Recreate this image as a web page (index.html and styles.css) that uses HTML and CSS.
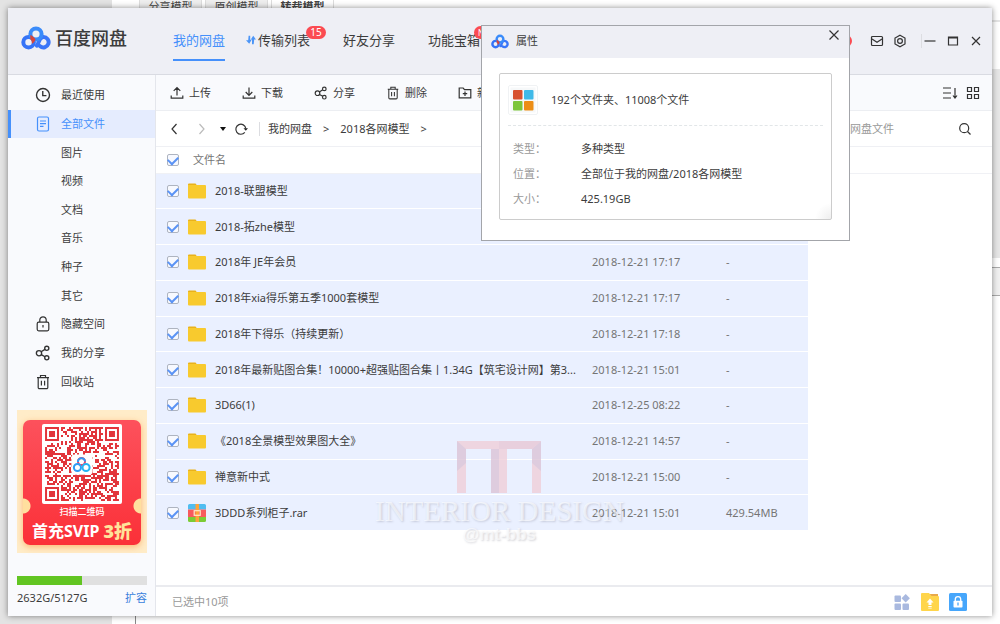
FILE: index.html
```html
<!DOCTYPE html>
<html lang="zh-CN">
<head>
<meta charset="utf-8">
<meta name="viewport" content="width=device-width, initial-scale=1">
<title>百度网盘</title>
<link rel="stylesheet" href="styles.css">
</head>
<body>
<svg class="sprite" aria-hidden="true">
  <symbol id="i-logo" viewBox="0 0 30 24">
    <g fill="none" stroke-width="4" stroke-linecap="round">
      <path d="M15.800 19.600C18.400 17.600 17.200 11.200 22.300 11a5.200 5.200 0 1 1-3.200 9.200" stroke="#3b76f8"/>
      <circle cx="7.600" cy="16.200" r="5.300" stroke="#3573f7"/>
      <circle cx="15" cy="8" r="5.600" stroke="#3a8bfa"/>
    </g>
    <path d="M9.300 9c2.200 1 4.500 2.600 5.200 4.800-.7 1.800-2.200 3.400-3.700 4 .2-1.800-.1-3.200-1.500-4.500z" fill="#d8453c"/>
  </symbol>
  <symbol id="i-clock" viewBox="0 0 14 14"><circle cx="7" cy="7" r="5.700"/><path d="M6.800 3.500V7.500H10"/></symbol>
  <symbol id="i-doc" viewBox="0 0 14 16"><rect x="1.500" y="1" width="11" height="14" rx="1.500"/><path d="M4 5h6M4 7.700h6M4 10.400h3.500"/></symbol>
  <symbol id="i-lock" viewBox="0 0 14 16"><rect x="1.200" y="6.200" width="11.600" height="8.600" rx="1.500"/><path d="M3.800 6V4a3.200 3.200 0 0 1 6.400 0v2M7 9v2.600"/></symbol>
  <symbol id="i-share" viewBox="0 0 14 14"><circle cx="3.500" cy="7.200" r="2.300"/><circle cx="10.300" cy="2.900" r="1.800"/><circle cx="10.300" cy="11.200" r="1.800"/><path d="M5.400 5.900 8.700 3.800M5.500 8.400l3.200 1.900"/></symbol>
  <symbol id="i-trash" viewBox="0 0 14 16"><path d="M1 3.600h12M4.500 3.300V1.500h5v1.800M2.200 3.800v9.700a1.200 1.200 0 0 0 1.200 1.200h7.200a1.200 1.200 0 0 0 1.200-1.200V3.800M5.400 6.800v4.800M8.600 6.800v4.800"/></symbol>
  <symbol id="i-up" viewBox="0 0 14 14"><path d="M7 9.500V2M3.700 4.900 7 1.600l3.300 3.300M1.200 9.500v2.700h11.600V9.500"/></symbol>
  <symbol id="i-down" viewBox="0 0 14 14"><path d="M7 1.500V9M3.700 6 7 9.300 10.300 6M1.200 9.500v2.700h11.600V9.500"/></symbol>
  <symbol id="i-newdir" viewBox="0 0 14 14"><path d="M1.200 2h4l1.300 1.600h6.300v8.200H1.200zM7 5.500v4.400M4.800 7.700h4.400"/></symbol>
  <symbol id="i-folder" viewBox="0 0 18 16"><path d="M0 1.500A1 1 0 0 1 1 .5h6.500l2 2.500H0z" fill="#e9b21b"/><path d="M0 2h17a1 1 0 0 1 1 1v11.500a1 1 0 0 1-1 1H1a1 1 0 0 1-1-1z" fill="#f8ca2e"/></symbol>
  <symbol id="i-rar" viewBox="0 0 18 18"><path d="M0 5.500V1.500A1.500 1.500 0 0 1 1.500 0h15A1.500 1.500 0 0 1 18 1.500v4z" fill="#50bdf0"/><path d="M0 5.500h18v7.500H0z" fill="#f75a5e"/><path d="M0 13h18v3.500a1.500 1.500 0 0 1-1.500 1.500h-15A1.500 1.500 0 0 1 0 16.500z" fill="#7ccb35"/><path d="M7.500 0h3.500v18H7.500z" fill="#ffa43a"/><rect x="6.200" y="6.700" width="6" height="4.600" fill="none" stroke="#fde9c8" stroke-width="1.200"/></symbol>
</svg>

<div class="desktop">
  <div class="backdrop" aria-hidden="true">
    <div class="back-side"></div>
    <div class="back-page"><div class="back-tabs"><span>分享模型</span><span>原创模型</span><span class="current">转载模型</span></div><i class="tick"></i></div>
    <div class="back-strip"><i class="strip-top"></i><i class="strip-mid"></i><i class="strip-low"></i></div>
  </div>

  <div class="window">
    <header class="titlebar">
      <div class="brand"><svg class="logo"><use href="#i-logo"/></svg><span>百度网盘</span></div>
      <nav class="tabs">
        <button class="tab active">我的网盘</button>
        <button class="tab"><svg class="transfer" viewBox="0 0 10 10"><path d="M2.600.8h1.600v4h1.500L3.200 8.800 0 5.200h2.200zM7.200.8 10 4.600H8.200l-.5 4.600H6V4.600H4.800z" fill="#4b95f7"/></svg>传输列表<span class="badge">15</span></button>
        <button class="tab">好友分享</button>
        <button class="tab">功能宝箱<span class="badge new">N</span></button>
      </nav>
      <div class="win-tools">
        <i class="edge-dot"></i>
        <button aria-label="消息"><svg viewBox="0 0 14 14" class="ic"><rect x="1.500" y="2.500" width="11" height="9" rx="1"/><path d="m2 5 5 3.200L12 5"/></svg></button>
        <button aria-label="设置"><svg viewBox="0 0 14 14" class="ic"><path d="M7 1.200 12 4v6L7 12.800 2 10V4z"/><circle cx="7" cy="7" r="2.400"/></svg></button>
        <i class="bar"></i>
        <button aria-label="最小化"><svg viewBox="0 0 14 14" class="ic"><path d="M1.500 7h11"/></svg></button>
        <button aria-label="最大化"><svg viewBox="0 0 14 14" class="ic"><path d="M2.500 3h9v8h-9zM2.500 4h9"/></svg></button>
        <button aria-label="关闭"><svg viewBox="0 0 14 14" class="ic"><path d="m3 3 8 8M11 3l-8 8"/></svg></button>
      </div>
    </header>

    <div class="body">
      <aside class="sidebar">
        <nav class="side-nav">
          <button><svg class="ic"><use href="#i-clock"/></svg>最近使用</button>
          <button class="active"><svg class="ic"><use href="#i-doc"/></svg>全部文件</button>
          <button><i></i>图片</button>
          <button><i></i>视频</button>
          <button><i></i>文档</button>
          <button><i></i>音乐</button>
          <button><i></i>种子</button>
          <button><i></i>其它</button>
          <button><svg class="ic"><use href="#i-lock"/></svg>隐藏空间</button>
          <button><svg class="ic"><use href="#i-share"/></svg>我的分享</button>
          <button><svg class="ic"><use href="#i-trash"/></svg>回收站</button>
        </nav>
        <div class="side-foot">
          <div class="promo">
            <div class="coupon">
              <svg class="qr" viewBox="0 0 79 79" role="img" aria-label="二维码">
                <path id="qr-dots" fill="#e2353b" transform="translate(3 3)"/>
                <rect x="29" y="30" width="21" height="20" rx="3" fill="#fff"/>
                <g fill="none" stroke-width="2"><circle cx="39" cy="37" r="3.500" stroke="#f0436a"/><circle cx="35" cy="43" r="3.500" stroke="#2f9df5"/><circle cx="43.500" cy="43" r="3.500" stroke="#25b4f3"/><path d="M35.500 37.500a3.500 3.500 0 0 1 7-.5" stroke="#2f9df5"/></g>
              </svg>
              <p class="scan">扫描二维码</p>
              <p class="offer">首充SVIP<b>3折</b></p>
            </div>
          </div>
          <div class="meter"><i style="width:50%"></i></div>
          <div class="quota"><span>2632G/5127G</span><a href="#">扩容</a></div>
        </div>
      </aside>

      <main class="main">
        <div class="toolbar">
          <button><svg class="ic"><use href="#i-up"/></svg>上传</button>
          <button><svg class="ic"><use href="#i-down"/></svg>下载</button>
          <button><svg class="ic"><use href="#i-share"/></svg>分享</button>
          <button><svg class="ic"><use href="#i-trash"/></svg>删除</button>
          <button><svg class="ic"><use href="#i-newdir"/></svg>新建文件夹</button>
          <span class="grow"></span>
          <button class="view" aria-label="排序"><svg class="ic wide" viewBox="0 0 16 14"><path d="M1 2h8M1 7h8M1 12h8M13 2v10M11 9.500l2 2.500 2-2.500"/></svg></button>
          <button class="view" aria-label="网格"><svg class="ic" viewBox="0 0 14 14"><path d="M1.500 1.500h4v4h-4zM8.500 1.500h4v4h-4zM1.500 8.500h4v4h-4zM8.500 8.500h4v4h-4z"/></svg></button>
        </div>
        <div class="pathbar">
          <button aria-label="后退"><svg class="ic" viewBox="0 0 14 14"><path d="M8.500 2 4 7l4.500 5"/></svg></button>
          <button class="dim" aria-label="前进"><svg class="ic" viewBox="0 0 14 14"><path d="m5.500 2 4.500 5-4.500 5"/></svg></button>
          <button class="caret" aria-label="历史"><svg viewBox="0 0 6 4"><path d="M0 0h6L3 4z" fill="#111"/></svg></button>
          <button aria-label="刷新"><svg class="ic" viewBox="0 0 14 14"><path d="M10.800 10.300A5 5 0 1 1 11.800 6.500"/><path d="M9.500 6.200h4.600l-2.300 2.600z" fill="#222" stroke="none"/></svg></button>
          <i class="bar"></i>
          <div class="crumbs"><a href="#">我的网盘</a><span>&gt;</span><a href="#">2018各网模型</a><span>&gt;</span></div>
          <label class="search"><input type="text" placeholder="搜索我的网盘文件" aria-label="搜索"><svg class="ic" viewBox="0 0 14 14"><circle cx="6.200" cy="6.200" r="4.500"/><path d="m9.500 9.500 3 3"/></svg></label>
        </div>
        <div class="list">
          <table>
            <colgroup><col class="c-check"><col><col class="c-date"><col class="c-size"><col class="c-rest"></colgroup>
            <thead><tr><th><input type="checkbox" checked aria-label="全选"></th><th colspan="4" class="h-name">文件名</th></tr></thead>
            <tbody>
              <tr><td><input type="checkbox" checked aria-label="选择"></td><td class="name"><svg><use href="#i-folder"/></svg>2018-联盟模型</td><td></td><td></td><td></td></tr>
              <tr><td><input type="checkbox" checked aria-label="选择"></td><td class="name"><svg><use href="#i-folder"/></svg>2018-拓zhe模型</td><td></td><td></td><td></td></tr>
              <tr><td><input type="checkbox" checked aria-label="选择"></td><td class="name"><svg><use href="#i-folder"/></svg>2018年 JE年会员</td><td>2018-12-21 17:17</td><td>-</td><td></td></tr>
              <tr><td><input type="checkbox" checked aria-label="选择"></td><td class="name"><svg><use href="#i-folder"/></svg>2018年xia得乐第五季1000套模型</td><td>2018-12-21 17:17</td><td>-</td><td></td></tr>
              <tr><td><input type="checkbox" checked aria-label="选择"></td><td class="name"><svg><use href="#i-folder"/></svg>2018年下得乐（持续更新）</td><td>2018-12-21 17:18</td><td>-</td><td></td></tr>
              <tr><td><input type="checkbox" checked aria-label="选择"></td><td class="name"><svg><use href="#i-folder"/></svg>2018年最新贴图合集！10000+超强贴图合集丨1.34G【筑宅设计网】第3...</td><td>2018-12-21 15:01</td><td>-</td><td></td></tr>
              <tr><td><input type="checkbox" checked aria-label="选择"></td><td class="name"><svg><use href="#i-folder"/></svg>3D66(1)</td><td>2018-12-25 08:22</td><td>-</td><td></td></tr>
              <tr><td><input type="checkbox" checked aria-label="选择"></td><td class="name"><svg><use href="#i-folder"/></svg>《2018全景模型效果图大全》</td><td>2018-12-21 14:57</td><td>-</td><td></td></tr>
              <tr><td><input type="checkbox" checked aria-label="选择"></td><td class="name"><svg><use href="#i-folder"/></svg>禅意新中式</td><td>2018-12-21 15:00</td><td>-</td><td></td></tr>
              <tr><td><input type="checkbox" checked aria-label="选择"></td><td class="name"><svg><use href="#i-rar"/></svg>3DDD系列柜子.rar</td><td>2018-12-21 15:01</td><td>429.54MB</td><td></td></tr>
            </tbody>
          </table>
        </div>
        <footer class="status">
          <span>已选中10项</span>
          <button aria-label="应用"><svg viewBox="0 0 18 18"><g fill="#a9b9df"><rect x="1.500" y="2.500" width="6.500" height="6.500" rx="1"/><rect x="1.500" y="10.500" width="6.500" height="6.500" rx="1"/><rect x="9.500" y="10.500" width="6.500" height="6.500" rx="1"/><path d="m12.700 1 4.200 4.200-4.200 4.200-4.200-4.200z"/></g></svg></button>
          <button aria-label="备份"><svg viewBox="0 0 18 18"><path d="M8 1h9v4H8z" fill="#e8a94a"/><path d="M0 1a1 1 0 0 1 1-1h7l2.500 3H17a1 1 0 0 1 1 1v13a1 1 0 0 1-1 1H1a1 1 0 0 1-1-1z" fill="#ffd54b"/><path d="m9 5.500 3.500 4h-2V12h-3V9.500h-2zM7.300 13h3.400v1H7.300zM7.300 14.800h3.400v.8H7.300z" fill="#fff"/></svg></button>
          <button aria-label="隐藏空间"><svg viewBox="0 0 18 18"><rect width="18" height="18" rx="1.500" fill="#46a6fb"/><rect x="4.500" y="7.800" width="9" height="6.700" rx=".8" fill="#fff"/><path d="M6.300 8V6.300a2.700 2.700 0 0 1 5.400 0V8" fill="none" stroke="#fff" stroke-width="1.300"/><path d="M9 9.500v3" stroke="#46a6fb" stroke-width="1.300"/></svg></button>
        </footer>
      </main>
    </div>
  </div>

  <div class="watermark" aria-hidden="true">
    <svg viewBox="0 0 84 52"><path d="M0 0h84v52h-9V8H50v44H34V8H9v44H0z" fill="#efcfd9"/><path d="M34 8h8v44h-8zM0 0l9 8v14L0 30zM84 0l-9 8v14l9 8z" fill="#dcc4d6"/><path d="M42 0h42l-9 8H42z" fill="#e8c8d5"/></svg>
    <p class="wm-title">INTERIOR DESIGN</p>
    <p class="wm-sub">@mt-bbs</p>
  </div>

  <section class="dialog" role="dialog" aria-label="属性">
    <header><svg><use href="#i-logo"/></svg><h2>属性</h2><button aria-label="关闭"><svg class="ic" viewBox="0 0 14 14"><path d="m2.500 2.500 9 9M11.500 2.500l-9 9"/></svg></button></header>
    <div class="card">
      <div class="summary">
        <svg viewBox="0 0 30 30"><rect x=".5" y=".5" width="29" height="29" rx="1.500" fill="#fff" stroke="#f0f2f4"/><rect x="2.500" y="2.500" width="25" height="25" fill="#f6f8f9"/><rect x="5" y="5" width="9.500" height="9.500" rx="1" fill="#d7512f"/><rect x="16" y="5" width="9.500" height="9.500" rx="1" fill="#3fb9e8"/><rect x="5" y="16" width="9.500" height="9.500" rx="1" fill="#7cc53a"/><rect x="16" y="16" width="9.500" height="9.500" rx="1" fill="#ec8e17"/></svg>
        <span>192个文件夹、11008个文件</span>
      </div>
      <dl>
        <dt>类型：</dt><dd>多种类型</dd>
        <dt>位置：</dt><dd>全部位于我的网盘/2018各网模型</dd>
        <dt>大小：</dt><dd>425.19GB</dd>
      </dl>
    </div>
  </section>
</div>
<script src="script.js"></script>
</body>
</html>
```
FILE: styles.css
```css
* { box-sizing: border-box; }
body {
  margin: 0;
  font: 11px/16px "Noto Sans", "Noto Sans CJK SC", sans-serif;
  color: #3c3c3c;
}
button { border: 0; padding: 0; background: none; font: inherit; color: inherit; }
a { color: inherit; text-decoration: none; }
p, h2, dl, dd { margin: 0; }
svg { display: block; flex: none; }
.sprite { position: absolute; width: 0; height: 0; }
.ic { width: 14px; height: 14px; fill: none; stroke: #333; stroke-width: 1.2; }
.grow { flex: 1; }
.bar { width: 1px; height: 14px; background: #dcdde1; }

.desktop { position: relative; display: grid; min-height: 100vh; }
.backdrop, .window { grid-area: 1 / 1; }
.backdrop { display: grid; grid-template-columns: 112px 1fr 8px; background: #fff; }
.back-side { background: #e3e3e3; }
.back-page { display: flex; flex-direction: column; justify-content: space-between; }
.back-tabs { display: flex; gap: 3px; padding-left: 27px; line-height: 14px; color: #444; }
.back-tabs span { width: 63px; text-align: center; background: #eee; border: solid #ddd; border-width: 0 1px; }
.back-tabs .current { background: #fff; font-weight: 700; }
.tick { width: 1px; height: 8px; margin-left: 23px; background: #888; }
.back-strip { display: grid; grid-template-rows: 20px 49px 189px 9px 29px 1fr; }
.strip-top { grid-row: 2; border-top: 2px solid #e4e4e4; }
.strip-mid { grid-row: 3; background: #e6e6e6; }
.strip-low { grid-row: 5; background: #f0f0f0; border: solid #aaa; border-width: 1px 0; }

.window {
  margin: 8px;
  display: flex;
  flex-direction: column;
  background: #fff;
  box-shadow: 0 0 6px rgba(0, 0, 0, .45);
}
.titlebar {
  display: flex;
  align-items: center;
  height: 67px;
  padding: 0 9px 0 13px;
  background: #eeeff5;
  border-bottom: 1px solid #d9dbe2;
}
.brand { display: flex; align-items: center; gap: 4px; padding-bottom: 6px; font-size: 18px; line-height: 26px; font-weight: 500; }
.logo { width: 30px; height: 24px; }
.tabs { display: flex; gap: 33px; margin-left: 46px; }
.tab {
  position: relative;
  font-size: 13px;
  line-height: 38px;
  border-bottom: 2px solid transparent;
}
.tab.active { color: #4590fb; border-color: #4590fb; }
.transfer { position: absolute; left: -12px; top: 14px; width: 10px; height: 10px; }
.badge {
  position: absolute;
  left: 48px;
  top: 5px;
  width: 20px;
  height: 13px;
  border-radius: 7px;
  background: #fb4b52;
  color: #fff;
  font-size: 10px;
  line-height: 13px;
  text-align: center;
}
.badge.new { left: 46px; font-size: 8px; text-align: left; padding-left: 4px; }
.win-tools { display: flex; align-items: center; gap: 9px; margin-left: auto; padding-bottom: 1px; }
.win-tools .bar { margin: 0 -8px 0 5px; }
.edge-dot { width: 12px; height: 12px; border-radius: 50%; background: #fb4b52; margin-right: 9px; }

.body { flex: 1; display: grid; grid-template-columns: 148px 1fr; }
.sidebar {
  display: flex;
  flex-direction: column;
  justify-content: space-between;
  background: #f9fafd;
  border-right: 1px solid #e4e6ec;
}
.side-nav { display: grid; grid-auto-rows: 1fr; height: 315px; margin-top: 6px; }
.side-nav button {
  display: flex;
  align-items: center;
  gap: 10px;
  padding-left: 24px;
  border-left: 3px solid transparent;
}
.side-nav .active { background: #e5ecfe; border-color: #4590fb; color: #4590fb; }
.side-nav i, .side-nav svg { width: 16px; height: 16px; }
.side-nav .active svg { stroke: #4590fb; }
.side-foot { padding: 0 8px 10px 9px; }
.promo { display: flex; padding: 10px 6px 8px; background: #ffecc8; }
.coupon {
  flex: 1;
  display: flex;
  flex-direction: column;
  align-items: center;
  height: 125px;
  padding-top: 4px;
  border-radius: 7px;
  color: #fff;
  background:
    radial-gradient(circle at 0 86px, #ffdf9e 7px, transparent 8px),
    radial-gradient(circle at 100% 86px, #ffdf9e 7px, transparent 8px),
    linear-gradient(#fd515c, #fb3038);
  box-shadow: 0 2px 6px rgba(250, 150, 60, .6);
}
.qr { width: 80px; height: 80px; background: #fff; border-radius: 2px; }
.scan { font-size: 9px; line-height: 16px; font-weight: 500; }
.offer { display: flex; gap: 4px; align-items: center; font-size: 16px; line-height: 22px; font-weight: 700; white-space: nowrap; }
.offer b { color: #ffe39a; font-size: 18px; }
.meter { height: 9px; margin-top: 23px; background: #e0e0e0; }
.meter i { display: block; height: 100%; background: #62c522; }
.quota { display: flex; justify-content: space-between; margin-top: 5px; }
.quota a { color: #3a7fdc; }

.main { display: flex; flex-direction: column; min-width: 0; }
.toolbar {
  display: flex;
  align-items: center;
  gap: 31px;
  height: 36px;
  padding: 0 12px 0 14px;
  background: #f9fafd;
  border-bottom: 1px solid #eceef2;
}
.toolbar button { display: flex; align-items: center; gap: 5px; white-space: nowrap; }
.toolbar .view + .view { margin-left: -23px; }
.toolbar .wide { width: 16px; }
.pathbar {
  display: flex;
  align-items: center;
  height: 36px;
  padding: 0 20px 0 12px;
  border-bottom: 1px solid #eff0f4;
}
.pathbar button + button { margin-left: 12px; }
.dim .ic { stroke: #bbb; }
.caret svg { width: 6px; height: 4px; }
.pathbar button.caret + button { margin-left: 8px; }
.pathbar .bar { margin: 0 8px 0 11px; }
.crumbs { display: flex; gap: 11px; }
.search { display: flex; align-items: center; margin-left: auto; }
.search input { width: 152px; border: 0; padding: 0; font: inherit; background: none; outline: 0; }
.search input::placeholder { color: #999; opacity: 1; }

.list { flex: 1; }
table { width: 100%; height: 384px; border-collapse: collapse; table-layout: fixed; }
.c-check { width: 32px; }
.c-date { width: 134px; }
.c-size { width: 82px; }
.c-rest { width: 184px; }
th, td { padding: 0; text-align: left; font-weight: 400; color: #757575; white-space: nowrap; }
thead tr { height: 26px; }
th { border-bottom: 1px solid #f0f1f5; }
td { border-bottom: 1px solid #fff; background: #eaf0ff; }
td:last-child { background: none; }
th:first-child, td:first-child { padding-left: 11px; }
.h-name { padding-left: 5px; }
.name { color: #3c3c3c; }
.name svg { display: inline-block; width: 18px; height: 18px; margin-right: 9px; vertical-align: -5px; }
input[type="checkbox"] {
  appearance: none;
  display: grid;
  justify-content: center;
  align-content: start;
  width: 12px;
  height: 12px;
  margin: 0;
  border: 1px solid #aeb4c0;
  border-radius: 2px;
  background: #f7f9ff;
}
input[type="checkbox"]:checked::after {
  content: "";
  width: 8px;
  height: 5px;
  margin-top: 1px;
  border: solid #5a93f5;
  border-width: 0 0 2px 2px;
  transform: rotate(-45deg);
}
.status {
  display: flex;
  align-items: center;
  gap: 10px;
  height: 31px;
  padding: 0 25px 0 16px;
  border-top: 2px solid #eaebef;
  color: #999;
}
.status span { flex: 1; }
.status svg { width: 18px; height: 18px; }

.watermark {
  position: absolute;
  left: 375px;
  top: 441px;
  display: flex;
  flex-direction: column;
  align-items: center;
  color: rgba(255, 255, 255, .6);
  text-shadow: 1px 1px 2px rgba(90, 90, 110, .25);
  pointer-events: none;
}
.watermark svg { width: 84px; height: 52px; opacity: .8; }
.wm-title { padding-top: 4px; font: 29px/29px "Liberation Serif", serif; white-space: nowrap; }
.wm-sub { font: 700 17px/18px "Liberation Sans", sans-serif; }

.dialog {
  position: absolute;
  left: 481px;
  top: 25px;
  width: 369px;
  background: #fff;
  border: 1px solid #a3a5aa;
}
.dialog > header {
  display: flex;
  align-items: center;
  gap: 7px;
  height: 32px;
  padding: 0 8px 2px 9px;
  background: #eeeff5;
}
.dialog > header > svg { width: 18px; height: 15px; }
.dialog h2 { flex: 1; font-size: 11px; font-weight: 400; }
.dialog > header button { padding-bottom: 12px; }
.card {
  margin: 15px 17px 20px;
  padding: 0 8px 8px;
  border: 1px solid #ccc;
  border-radius: 2px;
  background: radial-gradient(circle at 100% 100%, #eee, #fff 16px);
}
.summary { display: flex; align-items: center; gap: 13px; height: 52px; border-bottom: 1px dashed #e2e6e8; }
.summary svg { width: 30px; height: 30px; }
.dialog dl { display: grid; grid-template-columns: 68px 1fr; padding: 10px 0 0 5px; line-height: 25px; }
.dialog dt { color: #999; }
```
FILE: script.js
```js
// Fills the promo QR code with modules on a 37 x 37 grid, 73 units wide.
const size = 37;
const cell = 73 / size;
const finders = [[0, 0], [size - 7, 0], [0, size - 7]];
let seed = 20181;
const random = () => (seed = (seed * 1103515245 + 12345) % 2147483648) / 2147483648;

function isDark(x, y) {
  const noise = random() < 0.52;
  for (const [fx, fy] of finders) {
    const dx = x - fx, dy = y - fy;
    if (dx >= -1 && dx <= 7 && dy >= -1 && dy <= 7) {
      const ring = Math.max(Math.abs(dx - 3), Math.abs(dy - 3));
      return ring === 3 || ring < 2;
    }
  }
  return noise;
}

let path = "";
for (let y = 0; y < size; y++) {
  for (let x = 0; x < size; x++) {
    if (isDark(x, y)) path += `M${x * cell} ${y * cell}h${cell}v${cell}h${-cell}z`;
  }
}
document.getElementById("qr-dots").setAttribute("d", path);
```
